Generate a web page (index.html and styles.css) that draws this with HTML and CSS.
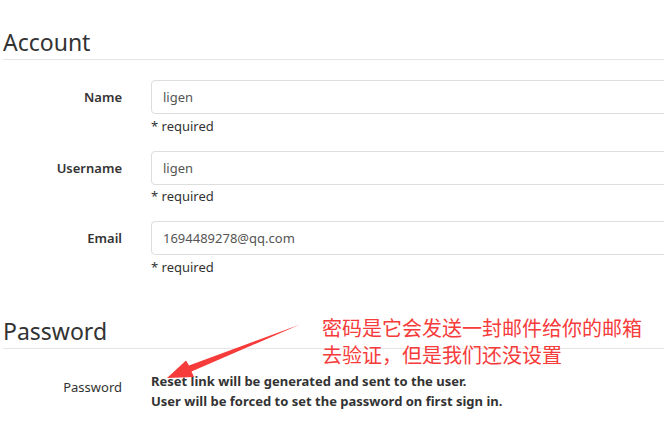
FILE: index.html
```html
<!DOCTYPE html>
<html>
<head>
<meta charset="utf-8">
<link rel="stylesheet" href="styles.css">
</head>
<body>

<div class="page">
  <fieldset class="section">
    <legend>Account</legend>

    <div class="row">
      <label class="label" for="user_name">Name</label>
      <div class="field">
        <input class="input" id="user_name" type="text" value="ligen">
        <div class="hint">* required</div>
      </div>
    </div>

    <div class="row">
      <label class="label" for="user_username">Username</label>
      <div class="field">
        <input class="input" id="user_username" type="text" value="ligen">
        <div class="hint">* required</div>
      </div>
    </div>

    <div class="row">
      <label class="label" for="user_email">Email</label>
      <div class="field">
        <input class="input" id="user_email" type="text" value="1694489278@qq.com">
        <div class="hint">* required</div>
      </div>
    </div>
  </fieldset>

  <fieldset class="section">
    <legend>Password</legend>

    <div class="row row-static">
      <label class="label label-light">Password</label>
      <div class="field">
        <div class="static">
          Reset link will be generated and sent to the user.<br>
          User will be forced to set the password on first sign in.
        </div>
      </div>
    </div>
  </fieldset>
</div>

<!-- annotation drawn on top of the screenshot -->
<div class="note">密码是它会发送一封邮件给你的邮箱<br>去验证，但是我们还没设置</div>
<svg class="arrow" width="664" height="427" viewBox="0 0 664 427">
  <polygon points="167,378 186,360.5 189,365.5 300,324.5 191.5,371.5 194,377" fill="#f63b3b"/>
</svg>

</body>
</html>
```

FILE: styles.css
```css
html {
  overflow: hidden;
}
body {
  margin: 0;
  font-family: "Noto Sans", "Open Sans", sans-serif;
  font-size: 13px;
  color: #333;
  background: #fff;
}
.page {
  padding: 25px 0 0 3px;
  width: 760px;
}
.section {
  border: 0;
  margin: 0;
  padding: 0;
  min-width: 0;
}
.section legend {
  display: block;
  width: 100%;
  padding: 0;
  margin-bottom: 20px;
  font-size: 23px;
  font-weight: 400;
  line-height: 34px;
  color: #333;
  border-bottom: 1px solid #e5e5e5;
}
.section + .section {
  margin-top: 22px;
}
.row {
  display: grid;
  grid-template-columns: 119px 1fr;
  column-gap: 29px;
  margin-bottom: 15px;
}
.label {
  text-align: right;
  font-weight: 600;
  line-height: 34px;
}
.label-light {
  font-weight: 400;
}
.input {
  display: block;
  box-sizing: border-box;
  width: 100%;
  height: 34px;
  padding: 6px 11px;
  font-family: inherit;
  font-size: 13px;
  color: #555;
  border: 1px solid #ddd;
  border-radius: 4px;
  background: #fff;
}
.hint {
  margin-top: 1.5px;
  line-height: 20px;
}
.row-static .label {
  line-height: 20px;
  padding-top: 8px;
}
.static {
  padding-top: 2px;
  font-weight: 700;
  line-height: 20px;
}
.note {
  position: absolute;
  left: 322px;
  top: 314px;
  font-family: "Noto Sans CJK SC", sans-serif;
  font-size: 20px;
  line-height: 27px;
  color: #f63b3b;
}
.arrow {
  position: absolute;
  left: 0;
  top: 0;
}
```
